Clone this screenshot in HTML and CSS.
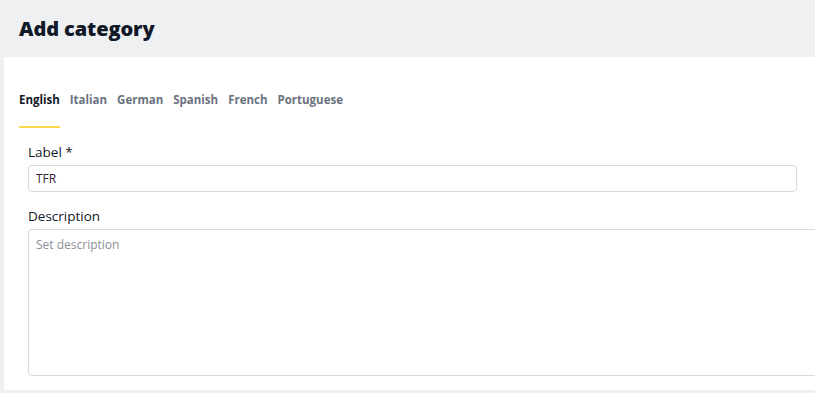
FILE: index.html
```html
<!DOCTYPE html>
<html>
<head>
<meta charset="utf-8">
<link rel="stylesheet" href="styles.css">
</head>
<body>
<header class="page-header">
  <h1 class="title">Add category</h1>
</header>
<main class="card">
  <nav class="tabs">
    <span class="tab active">English</span>
    <span class="tab">Italian</span>
    <span class="tab">German</span>
    <span class="tab">Spanish</span>
    <span class="tab">French</span>
    <span class="tab">Portuguese</span>
  </nav>
  <form class="form">
    <label class="field">
      <span class="field-label">Label *</span>
      <input class="input" type="text" value="TFR">
    </label>
    <label class="field">
      <span class="field-label">Description</span>
      <textarea class="textarea" placeholder="Set description"></textarea>
    </label>
  </form>
</main>
</body>
</html>
```

FILE: styles.css
```css
html, body {
  margin: 0;
  padding: 0;
  background: #eff0f2;
  overflow: hidden;
  font-family: "Open Sans", "Noto Sans", sans-serif;
}
.page-header {
  height: 57px;
  display: flex;
  align-items: center;
  padding-left: 19px;
}
.title {
  margin: 0;
  font-size: 20px;
  font-weight: 800;
  color: #111827;
  letter-spacing: -0.1px;
}
.card {
  background: #fff;
  margin-left: 4px;
  width: 830px;
  padding: 35px 0 14px 15px;
  box-sizing: border-box;
}
.tabs {
  display: flex;
  gap: 10px;
}
.tab {
  font-size: 11.5px;
  font-weight: 700;
  color: #6b7280;
  line-height: 16px;
  height: 36px;
  letter-spacing: 0;
  box-sizing: border-box;
}
.tab.active {
  color: #111827;
  border-bottom: 2px solid #fdd94a;
}
.form {
  padding-left: 9px;
  padding-top: 15px;
  display: flex;
  flex-direction: column;
  gap: 15px;
}
.field {
  display: flex;
  flex-direction: column;
  gap: 4px;
}
.field-label {
  font-size: 13.5px;
  color: #111827;
  line-height: 18px;
}
.input {
  width: 769px;
  height: 27px;
  box-sizing: border-box;
  border: 1px solid #d3dbe6;
  border-radius: 4px;
  padding: 0 7px;
  font-family: inherit;
  font-size: 12px;
  color: #3b1f33;
  outline: none;
  margin: 0;
}
.textarea {
  width: 820px;
  height: 147px;
  box-sizing: border-box;
  border: 1px solid #d3dbe6;
  border-radius: 4px;
  padding: 6px 7px;
  font-family: inherit;
  font-size: 12px;
  resize: none;
  outline: none;
  display: block;
  margin: 0;
}
.textarea::placeholder {
  color: #8b8f98;
}
```
